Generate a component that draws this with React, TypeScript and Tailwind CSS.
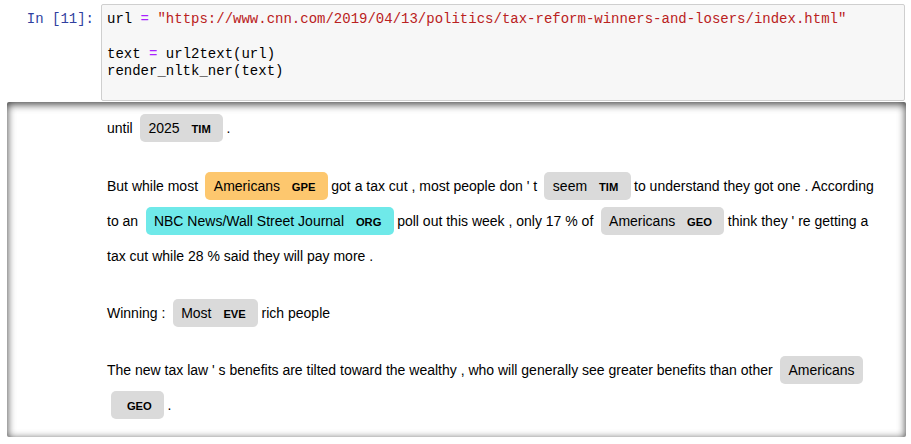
import React from "react";

type EntProps = { text: string; label: string; bg: string };

// one highlighted entity, same shape as a displaCy mark
const Ent: React.FC<EntProps> = ({ text, label, bg }) => (
  <mark
    className={`${bg} text-black box-decoration-clone rounded-[5px] px-[8.4px] py-[6.3px] mx-[3.5px] leading-none`}
  >
    {text}{" "}
    <span className="text-[11.2px] font-bold leading-none align-middle ml-2">{label}</span>{" "}
  </mark>
);

const App: React.FC = () => {
  return (
    <div className="w-[911px] h-[444px] bg-white overflow-hidden">
      {/* Input cell */}
      <div className="flex pt-[4px]">
        <div className="w-[101px] pr-[7px] pt-[7px] text-right text-[14px] leading-[17.3px] text-[#303F9F] font-['Liberation_Mono',monospace]">
          In [11]:
        </div>
        <div className="w-[804px] h-[97px] border border-[#cfcfcf] rounded-[2px] bg-[#f7f7f7] pl-[5px] pt-[6px] text-[14px] leading-[17.3px] text-black font-['Liberation_Mono',monospace] whitespace-pre">
          <div>
            url <span className="text-[#AA22FF]">=</span>{" "}
            <span className="text-[#BA2121]">
              "https://www.cnn.com/2019/04/13/politics/tax-reform-winners-and-losers/index.html"
            </span>
          </div>
          <div className="h-[17.3px]"></div>
          <div>
            text <span className="text-[#AA22FF]">=</span> url2text(url)
          </div>
          <div>render_nltk_ner(text)</div>
        </div>
      </div>

      {/* Output area */}
      <div className="ml-[7px] mt-[1px] w-[899px] h-[335px] rounded-[2px] shadow-[inset_0_2px_8px_rgba(0,0,0,0.8)] pl-[100px] pt-[9px] text-[14px] leading-[35px] text-black font-['Liberation_Sans',Arial,sans-serif] whitespace-nowrap">
        <div>
          until <Ent text="2025" label="TIM" bg="bg-[#dadada]" />.
        </div>

        <div className="mt-[23px]">
          But while most <Ent text="Americans" label="GPE" bg="bg-[#fdc76e]" />
          got a tax cut , most people don ' t <Ent text="seem" label="TIM" bg="bg-[#dadada]" />
          to understand they got one . According
          <br />
          to an <Ent text="NBC News/Wall Street Journal" label="ORG" bg="bg-[#6fe9e9]" />
          poll out this week , only 17 % of <Ent text="Americans" label="GEO" bg="bg-[#dadada]" />
          think they ' re getting a
          <br />
          tax cut while 28 % said they will pay more .
        </div>

        <div className="mt-[22px]">
          Winning : <Ent text="Most" label="EVE" bg="bg-[#dadada]" />
          rich people
        </div>

        <div className="mt-[22px]">
          The new tax law ' s benefits are tilted toward the wealthy , who will generally see greater
          benefits than other{" "}
          <mark className="bg-[#dadada] text-black box-decoration-clone rounded-[5px] px-[8.4px] py-[6.3px] mx-[3.5px] leading-none">
            Americans
            <br />
            <span className="text-[11.2px] font-bold leading-none align-middle ml-2">GEO</span>{" "}
          </mark>
          .
        </div>
      </div>
    </div>
  );
};

export default App;
